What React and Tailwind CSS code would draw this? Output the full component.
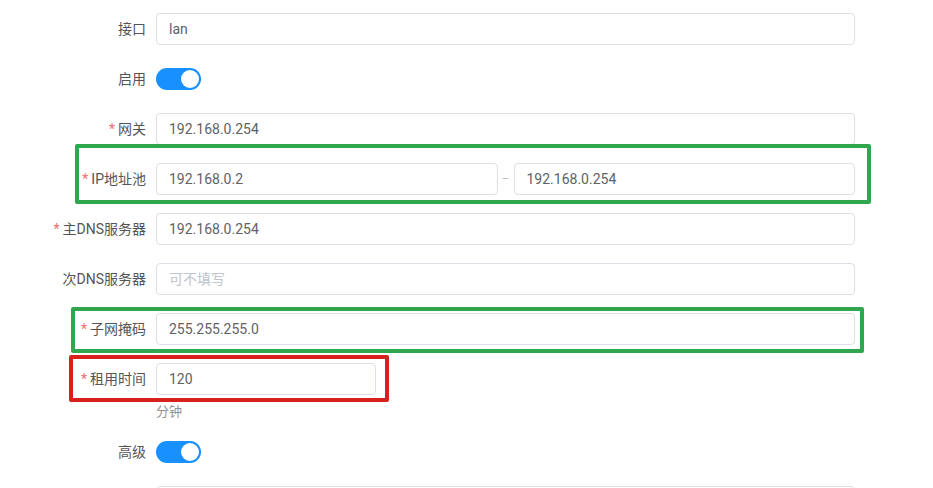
import React from 'react'

const font = { fontFamily: 'Roboto, "Noto Sans CJK SC", sans-serif' }

function Label({ text, required }) {
  return (
    <div className="w-[156px] shrink-0 pr-[10px] flex items-center justify-end text-[14px] text-[#555]">
      {required && <span className="text-[#f56c6c] mr-[3px]">*</span>}
      {text}
    </div>
  )
}

function Input({ value, placeholder, className = 'flex-1' }) {
  return (
    <div
      className={`${className} h-[32px] border border-[#dcdfe6] rounded-[4px] bg-white flex items-center px-[12px] text-[14px] ${
        value ? 'text-[#606266]' : 'text-[#c0c4cc]'
      }`}
    >
      {value || placeholder}
    </div>
  )
}

function Switch() {
  return (
    <div className="w-[45px] h-[22px] rounded-full bg-[#1890ff] flex items-center justify-end px-[2px]">
      <div className="w-[18px] h-[18px] rounded-full bg-white" />
    </div>
  )
}

function Row({ label, required, children, className = 'mb-[18px]' }) {
  return (
    <div className={`flex h-[32px] ${className}`}>
      <Label text={label} required={required} />
      <div className="flex-1 flex items-center">{children}</div>
    </div>
  )
}

export default function App() {
  return (
    <div style={font} className="relative w-[933px] h-[488px] overflow-hidden bg-white">
      <div className="w-[855px] pt-[13px]">
        <Row label="接口">
          <Input value="lan" />
        </Row>
        <Row label="启用">
          <Switch />
        </Row>
        <Row label="网关" required>
          <Input value="192.168.0.254" />
        </Row>
        <Row label="IP地址池" required>
          <Input value="192.168.0.2" />
          <span className="w-[16px] text-center text-[12px] text-[#c0c4cc]">–</span>
          <Input value="192.168.0.254" />
        </Row>
        <Row label="主DNS服务器" required>
          <Input value="192.168.0.254" />
        </Row>
        <Row label="次DNS服务器">
          <Input placeholder="可不填写" />
        </Row>
        <Row label="子网掩码" required>
          <Input value="255.255.255.0" />
        </Row>
        <Row label="租用时间" required className="mb-0">
          <Input value="120" className="w-[220px]" />
        </Row>
        <div className="pl-[156px] pt-[7px] pb-[15px] h-[41px] text-[13px] leading-[19px] text-[#909399]">
          分钟
        </div>
        <Row label="高级">
          <Switch />
        </Row>
        <Row label="">
          <Input value="" />
        </Row>
      </div>

      <div className="absolute left-[75px] top-[144px] w-[796px] h-[60px] border-[4px] border-[#30a64f] rounded-[2px]" />
      <div className="absolute left-[71px] top-[307px] w-[793px] h-[46px] border-[4px] border-[#30a64f] rounded-[2px]" />
      <div className="absolute left-[69px] top-[355px] w-[320px] h-[47px] border-[4px] border-[#d8211c] rounded-[2px]" />
    </div>
  )
}
